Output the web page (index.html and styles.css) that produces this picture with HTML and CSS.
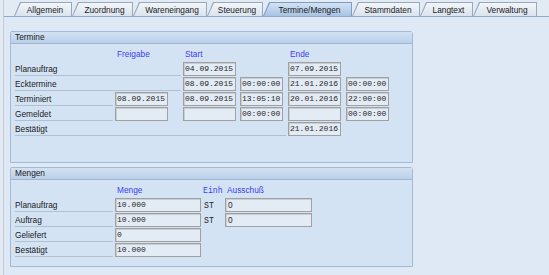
FILE: index.html
```html
<!DOCTYPE html>
<html lang="de">
<head>
    <meta charset="UTF-8">
    <title>Fertigungsauftrag - Termine/Mengen</title>
    <link rel="stylesheet" href="styles.css">
</head>
<body>
    <div class="screen">
        <div class="tabstrip">
            <div class="tab"><span>Allgemein</span></div>
            <div class="tab"><span>Zuordnung</span></div>
            <div class="tab"><span>Wareneingang</span></div>
            <div class="tab"><span>Steuerung</span></div>
            <div class="tab active"><span>Termine/Mengen</span></div>
            <div class="tab"><span>Stammdaten</span></div>
            <div class="tab"><span>Langtext</span></div>
            <div class="tab"><span>Verwaltung</span></div>
        </div>

        <div class="content">
            <!-- Termine -->
            <section class="group group-termine">
                <div class="group-head">Termine</div>
                <div class="group-body">
                    <div class="grid termine-grid">
                        <span class="colhead c2">Freigabe</span>
                        <span class="colhead c3">Start</span>
                        <span class="colhead c5">Ende</span>

                        <span class="label span-2">Planauftrag</span>
                        <span class="field f-date c3">04.09.2015</span>
                        <span class="field f-date c5">07.09.2015</span>

                        <span class="label span-2">Ecktermine</span>
                        <span class="field f-date c3">08.09.2015</span>
                        <span class="field f-time c4">00:00:00</span>
                        <span class="field f-date c5">21.01.2016</span>
                        <span class="field f-time c6">00:00:00</span>

                        <span class="label">Terminiert</span>
                        <span class="field f-date c2">08.09.2015</span>
                        <span class="field f-date c3">08.09.2015</span>
                        <span class="field f-time c4">13:05:10</span>
                        <span class="field f-date c5">20.01.2016</span>
                        <span class="field f-time c6">22:00:00</span>

                        <span class="label">Gemeldet</span>
                        <span class="field f-date c2"></span>
                        <span class="field f-date c3"></span>
                        <span class="field f-time c4">00:00:00</span>
                        <span class="field f-date c5"></span>
                        <span class="field f-time c6">00:00:00</span>

                        <span class="label span-4">Bestätigt</span>
                        <span class="field f-date c5">21.01.2016</span>
                    </div>
                </div>
            </section>

            <!-- Mengen -->
            <section class="group group-mengen">
                <div class="group-head">Mengen</div>
                <div class="group-body">
                    <div class="grid mengen-grid">
                        <span class="colhead c2">Menge</span>
                        <span class="colhead mono c3">Einh</span>
                        <span class="colhead c4">Ausschuß</span>

                        <span class="label">Planauftrag</span>
                        <span class="field f-qty c2">10.000</span>
                        <span class="unit c3">ST</span>
                        <span class="field f-scrap sans c4">0</span>

                        <span class="label">Auftrag</span>
                        <span class="field f-qty c2">10.000</span>
                        <span class="unit c3">ST</span>
                        <span class="field f-scrap sans c4">0</span>

                        <span class="label">Geliefert</span>
                        <span class="field f-qty c2">0</span>

                        <span class="label">Bestätigt</span>
                        <span class="field f-qty c2">10.000</span>
                    </div>
                </div>
            </section>
        </div>
    </div>
</body>
</html>
```

FILE: styles.css
```css
/* SAP GUI blue theme */
:root {
    --bg-outer: #e4eaf1;
    --bg-panel: #dfe9f5;
    --bg-group: #d4e3f4;
    --border-group: #a3b9d4;
    --border-tab: #98a9bd;
    --border-tab-active: #7f9ec4;
    --line-label: #b2c1d2;
    --text: #1a1a1a;
    --text-field: #262626;
    --text-head: #3c3cf0;
    --field-bg: #e3ebf5;
    --field-border: #a0a0a0;
}

* {
    box-sizing: border-box;
    margin: 0;
    padding: 0;
}

body {
    font-family: "Liberation Sans", Arial, sans-serif;
    font-size: 8.3px;
    color: var(--text);
    background: var(--bg-outer);
    width: 549px;
    height: 275px;
    overflow: hidden;
}

.screen {
    margin-left: 3px;
    height: 275px;
    border-left: 1px solid #c0cbd7;
    background: var(--bg-panel);
}

/* Tabs */
.tabstrip {
    display: flex;
    align-items: flex-end;
    height: 17px;
    padding-left: 10px;
    border-bottom: 1px solid #8ea8c8;
    background: #e2eaf3;
}

.tab {
    display: flex;
    height: 14px;
    padding: 1px 1px 0 1px;
    background: var(--border-tab);
    clip-path: polygon(0 100%, 6px 0, 100% 0, 100% 100%);
}

.tab span {
    flex: 1;
    display: flex;
    align-items: center;
    justify-content: center;
    padding-left: 4px;
    white-space: nowrap;
    background: linear-gradient(#f3f6fa, #dae3ee);
    clip-path: polygon(0 100%, 6px 0, 100% 0, 100% 100%);
}

.tab.active {
    background: var(--border-tab-active);
}

.tab.active span {
    background: linear-gradient(#d2e2f4, #a8c3e3);
}

.tab:nth-child(1) { width: 58px; }
.tab:nth-child(2) { width: 61px; }
.tab:nth-child(3) { width: 74px; }
.tab:nth-child(4) { width: 56px; }
.tab:nth-child(5) { width: 89px; }
.tab:nth-child(6) { width: 68px; }
.tab:nth-child(7) { width: 53px; }
.tab:nth-child(8) { width: 64px; }

/* Groups */
.content {
    display: flex;
    flex-direction: column;
    gap: 4px;
    padding: 14px 0 0 6px;
}

.group {
    width: 403px;
    border: 1px solid var(--border-group);
    border-radius: 2px 3px 0 0;
    background: var(--bg-group);
}

.group-termine {
    height: 132px;
}

.group-mengen {
    height: 100px;
}

.group-head {
    height: 12px;
    line-height: 11px;
    padding-left: 4px;
    background: linear-gradient(#d3e2f2, #bad0e8);
    border-bottom: 1px solid #9fb5d0;
}

.group-body {
    padding: 3px 0 0 4px;
}

/* Field grids */
.grid {
    display: grid;
    grid-auto-rows: 14px;
    row-gap: 1px;
    align-items: center;
}

.termine-grid {
    grid-template-columns: 100px 68px 57px 48px 58px 43px;
}

.mengen-grid {
    grid-template-columns: 100px 88px 22px 87px;
}

.c2 { grid-column: 2; }
.c3 { grid-column: 3; }
.c4 { grid-column: 4; }
.c5 { grid-column: 5; }
.c6 { grid-column: 6; }
.span-2 { grid-column: 1 / 3; }
.span-4 { grid-column: 1 / 5; }

.label {
    grid-column-start: 1;
    align-self: stretch;
    margin-right: 2px;
    line-height: 14px;
    border-bottom: 1px solid var(--line-label);
    white-space: nowrap;
}

.colhead {
    color: var(--text-head);
    padding-left: 2px;
    white-space: nowrap;
}

.mono,
.unit {
    font-family: "Liberation Mono", "Courier New", monospace;
    font-size: 8.2px;
}

.colhead.mono {
    padding-left: 0;
}

.unit {
    padding-left: 1px;
    color: var(--text-field);
}

.field {
    height: 14px;
    padding-left: 1px;
    background: var(--field-bg);
    border: 1px solid var(--field-border);
    box-shadow: inset 1px 1px 0 #c8ced6;
    font-family: "Liberation Mono", "Courier New", monospace;
    font-size: 8px;
    line-height: 12px;
    color: var(--text-field);
    white-space: nowrap;
    overflow: hidden;
}

.field.sans {
    font-family: "Liberation Sans", Arial, sans-serif;
    font-size: 8.3px;
    padding-left: 2px;
}

.f-date { width: 53px; }
.f-time { width: 43px; }
.f-qty { width: 86px; }
.f-scrap { width: 87px; }
```
